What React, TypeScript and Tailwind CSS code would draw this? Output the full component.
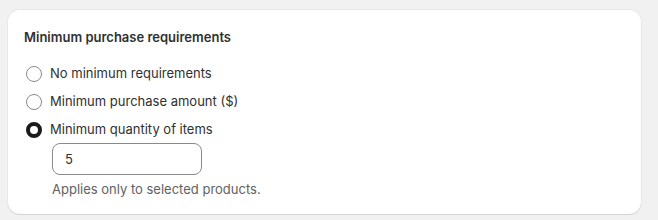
import { useState } from 'react'

const OPTIONS = [
  { id: 'none', label: 'No minimum requirements' },
  { id: 'amount', label: 'Minimum purchase amount ($)' },
  { id: 'quantity', label: 'Minimum quantity of items' },
]

function Radio({ checked }: { checked: boolean }) {
  return checked ? (
    <span className="w-4 h-4 rounded-full border-4 border-[#1a1a1a] bg-white shrink-0" />
  ) : (
    <span className="w-4 h-4 rounded-full border border-[#8a8a8a] bg-white shrink-0" />
  )
}

export default function App() {
  const [selected, setSelected] = useState('quantity')
  const [qty, setQty] = useState('5')

  return (
    <div
      className="w-[658px] h-[220px] bg-[#f1f1f1] pt-[10px] pl-[8px] pr-[17px]"
      style={{ fontFamily: 'Inter, "Noto Sans", sans-serif' }}
    >
      <div className="bg-white rounded-xl shadow-[0_1px_0_0_#d4d4d4,0_0_0_1px_#e8e8e8] h-[204px] px-4 pt-[19px]">
        <h2 className="text-[13px] font-semibold text-[#303030] leading-4">Minimum purchase requirements</h2>
        <div className="mt-[21px] flex flex-col gap-3">
          {OPTIONS.map((o) => (
            <label
              key={o.id}
              className="flex items-center gap-2 h-4 cursor-pointer pl-[2px]"
              onClick={() => setSelected(o.id)}
            >
              <Radio checked={selected === o.id} />
              <span className="text-[13px] text-[#303030]">{o.label}</span>
            </label>
          ))}
        </div>
        {selected === 'quantity' && (
          <div className="pl-7 mt-[5px]">
            <input
              value={qty}
              onChange={(e) => setQty(e.target.value)}
              className="w-[150px] h-[32px] rounded-lg border border-[#8a8a8a] px-3 text-[13px] text-[#303030] outline-none"
            />
            <p className="mt-[5px] text-[13px] text-[#616161]">Applies only to selected products.</p>
          </div>
        )}
      </div>
    </div>
  )
}
